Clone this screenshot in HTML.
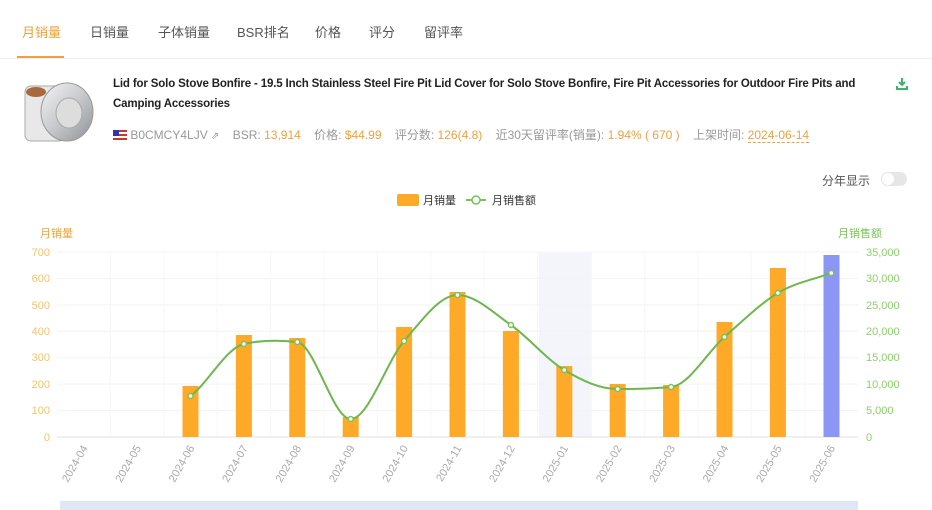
<!DOCTYPE html>
<html><head><meta charset="utf-8"><style>
body{margin:0;width:932px;height:510px;overflow:hidden;background:#fff;font-family:"Liberation Sans","Noto Sans CJK SC",sans-serif;position:relative}
.tabs{position:absolute;top:0;left:0;width:932px;height:58px;border-bottom:1px solid #eee}
.tab{position:absolute;top:22px;font-size:13px;color:#555}
.act{color:#f0a03c}
.ul{position:absolute;left:17px;top:56px;width:47px;height:2px;background:#f0a03c}
.title{position:absolute;left:113px;top:74px;width:775px;font-size:11.5px;letter-spacing:-0.15px;font-weight:bold;color:#222;line-height:20px}
.meta{position:absolute;left:113px;top:126px;font-size:12px;color:#999;white-space:nowrap}
.meta b{font-weight:normal;color:#f0a03c}
.abs{position:absolute}
</style></head><body>
<div class="tabs">
<span class="tab act" style="left:22px">月销量</span>
<span class="tab" style="left:90px">日销量</span>
<span class="tab" style="left:158px">子体销量</span>
<span class="tab" style="left:237px">BSR排名</span>
<span class="tab" style="left:315px">价格</span>
<span class="tab" style="left:369px">评分</span>
<span class="tab" style="left:424px">留评率</span>
<div class="ul"></div>
</div>
<svg class="abs" style="left:22px;top:78px" width="76" height="66">
<defs><linearGradient id="m" x1="0" y1="0" x2="1" y2="1"><stop offset="0" stop-color="#f4f4f4"/><stop offset=".5" stop-color="#c7c9cc"/><stop offset="1" stop-color="#8f9296"/></linearGradient></defs>
<rect x="3" y="8" width="40" height="55" rx="6" fill="#e8e8e8" stroke="#aaa"/>
<ellipse cx="14" cy="14" rx="10" ry="5" fill="#a86a3c"/>
<ellipse cx="45" cy="34" rx="26" ry="29" fill="url(#m)" stroke="#999"/>
<ellipse cx="47" cy="35" rx="13" ry="15" fill="#ddd" stroke="#aaa"/>
</svg>
<div class="title">Lid for Solo Stove Bonfire - 19.5 Inch Stainless Steel Fire Pit Lid Cover for Solo Stove Bonfire, Fire Pit Accessories for Outdoor Fire Pits and Camping Accessories</div>
<svg class="abs" style="left:896px;top:77px" width="12" height="13"><path d="M6 1v7M3 5l3 3 3-3M1 9v3h10V9" stroke="#3cb371" stroke-width="2" fill="none"/></svg>
<div class="meta"><span style="display:inline-block;width:14px;height:10px;background:linear-gradient(#c33 0 20%,#fff 20% 40%,#c33 40% 60%,#fff 60% 80%,#c33 80%);position:relative;vertical-align:-1px"><span style="position:absolute;left:0;top:0;width:6px;height:6px;background:#33a"></span></span> B0CMCY4LJV <span style="font-size:10px">⇗</span>&nbsp;&nbsp;&nbsp;&nbsp;BSR: <b>13,914</b>&nbsp;&nbsp;&nbsp;&nbsp;价格: <b>$44.99</b>&nbsp;&nbsp;&nbsp;&nbsp;评分数: <b>126(4.8)</b>&nbsp;&nbsp;&nbsp;&nbsp;近30天留评率(销量): <b>1.94% ( 670 )</b>&nbsp;&nbsp;&nbsp;&nbsp;上架时间: <b style="border-bottom:1px dashed #f0a03c">2024-06-14</b></div>
<div class="abs" style="left:822px;top:172px;font-size:12px;color:#555">分年显示</div>
<div class="abs" style="left:881px;top:172px;width:26px;height:14px;border-radius:7px;background:#e6e6e6"><div style="width:12px;height:12px;margin:1px;border-radius:6px;background:#fff"></div></div>
<svg class="abs" style="left:0;top:0" width="932" height="510">
<g font-size="11" font-family="Liberation Sans,Noto Sans CJK SC,sans-serif">
<rect x="397" y="194" width="22" height="12" rx="2" fill="#ffa929"/>
<text x="423" y="204" fill="#333">月销量</text>
<path d="M466 200h20" stroke="#7ac35a" stroke-width="2"/><circle cx="476" cy="200" r="4" fill="#fff" stroke="#7ac35a" stroke-width="1.5"/>
<text x="492" y="204" fill="#333">月销售额</text>
<text x="40" y="237" fill="#f0a03c">月销量</text>
<text x="838" y="237" fill="#7ac35a">月销售额</text>
<rect x="539" y="253" width="53" height="184" fill="#f3f5fa"/>
<g stroke="#f3f3f3">
<path d="M57 252H858M57 278.4H858M57 304.9H858M57 331.3H858M57 357.7H858M57 384.1H858M57 410.6H858"/>
</g>
<g stroke="#f7f7f7">
<path d="M110.4 252V437M163.8 252V437M217.2 252V437M270.6 252V437M324 252V437M377.4 252V437M430.8 252V437M484.2 252V437M537.6 252V437M591 252V437M644.4 252V437M697.8 252V437M751.2 252V437M804.6 252V437"/>
</g>
<path d="M57 437H858" stroke="#e0e0e0"/>
<g fill="#f5c36a" text-anchor="end">
<text x="50" y="256">700</text><text x="50" y="282">600</text><text x="50" y="309">500</text><text x="50" y="335">400</text><text x="50" y="361">300</text><text x="50" y="388">200</text><text x="50" y="414">100</text><text x="50" y="441">0</text>
</g>
<g fill="#8cd06a">
<text x="866" y="256">35,000</text><text x="866" y="282">30,000</text><text x="866" y="309">25,000</text><text x="866" y="335">20,000</text><text x="866" y="361">15,000</text><text x="866" y="388">10,000</text><text x="866" y="414">5,000</text><text x="866" y="441">0</text>
</g>
<g fill="#ffa929">
<rect x="182.5" y="386" width="16" height="51"/><rect x="235.9" y="335" width="16" height="102"/><rect x="289.3" y="338" width="16" height="99"/><rect x="342.7" y="417" width="16" height="20"/><rect x="396.1" y="327" width="16" height="110"/><rect x="449.5" y="292" width="16" height="145"/><rect x="502.9" y="331" width="16" height="106"/><rect x="556.3" y="366" width="16" height="71"/><rect x="609.7" y="384" width="16" height="53"/><rect x="663.1" y="385" width="16" height="52"/><rect x="716.5" y="322" width="16" height="115"/><rect x="769.9" y="268" width="16" height="169"/>
</g>
<rect x="823.5" y="255" width="16" height="182" fill="#8c96f5"/>
<path d="M190.5 396C208.3 382.7 226.1 348 243.9 344C261.7 340 279.5 340 297.3 342C315.1 345.3 332.9 419 350.7 419C368.5 419 386.3 361.7 404.1 341C421.9 320.3 439.7 295 457.5 295C475.3 295 493.1 312.5 510.9 325C528.7 337.5 546.5 359.3 564.3 370C582.1 380.7 599.9 389 617.7 389C635.5 389 653.3 388.7 671.1 387C688.9 385.3 706.7 352.7 724.5 337C742.3 321.3 760.1 303.7 777.9 293C795.7 282.3 813.5 279.7 831.3 273" stroke="#6cb84e" stroke-width="2" fill="none"/>
<g fill="#fff" stroke="#7ac35a" stroke-width="1.5">
<circle cx="190.5" cy="396" r="2.5"/><circle cx="243.9" cy="344" r="2.5"/><circle cx="297.3" cy="342" r="2.5"/><circle cx="350.7" cy="419" r="2.5"/><circle cx="404.1" cy="341" r="2.5"/><circle cx="457.5" cy="295" r="2.5"/><circle cx="510.9" cy="325" r="2.5"/><circle cx="564.3" cy="370" r="2.5"/><circle cx="617.7" cy="389" r="2.5"/><circle cx="671.1" cy="387" r="2.5"/><circle cx="724.5" cy="337" r="2.5"/><circle cx="777.9" cy="293" r="2.5"/><circle cx="831.3" cy="273" r="2.5"/>
</g>
<g fill="#aaa" font-size="11">
<text transform="translate(88,448) rotate(-60)" text-anchor="end">2024-04</text>
<text transform="translate(141.4,448) rotate(-60)" text-anchor="end">2024-05</text>
<text transform="translate(194.8,448) rotate(-60)" text-anchor="end">2024-06</text>
<text transform="translate(248.2,448) rotate(-60)" text-anchor="end">2024-07</text>
<text transform="translate(301.6,448) rotate(-60)" text-anchor="end">2024-08</text>
<text transform="translate(355,448) rotate(-60)" text-anchor="end">2024-09</text>
<text transform="translate(408.4,448) rotate(-60)" text-anchor="end">2024-10</text>
<text transform="translate(461.8,448) rotate(-60)" text-anchor="end">2024-11</text>
<text transform="translate(515.2,448) rotate(-60)" text-anchor="end">2024-12</text>
<text transform="translate(568.6,448) rotate(-60)" text-anchor="end">2025-01</text>
<text transform="translate(622,448) rotate(-60)" text-anchor="end">2025-02</text>
<text transform="translate(675.4,448) rotate(-60)" text-anchor="end">2025-03</text>
<text transform="translate(728.8,448) rotate(-60)" text-anchor="end">2025-04</text>
<text transform="translate(782.2,448) rotate(-60)" text-anchor="end">2025-05</text>
<text transform="translate(835.6,448) rotate(-60)" text-anchor="end">2025-06</text>
</g>
<rect x="60" y="501" width="798" height="12" fill="#dfe7f5"/>
</g>
</svg>
</body></html>
